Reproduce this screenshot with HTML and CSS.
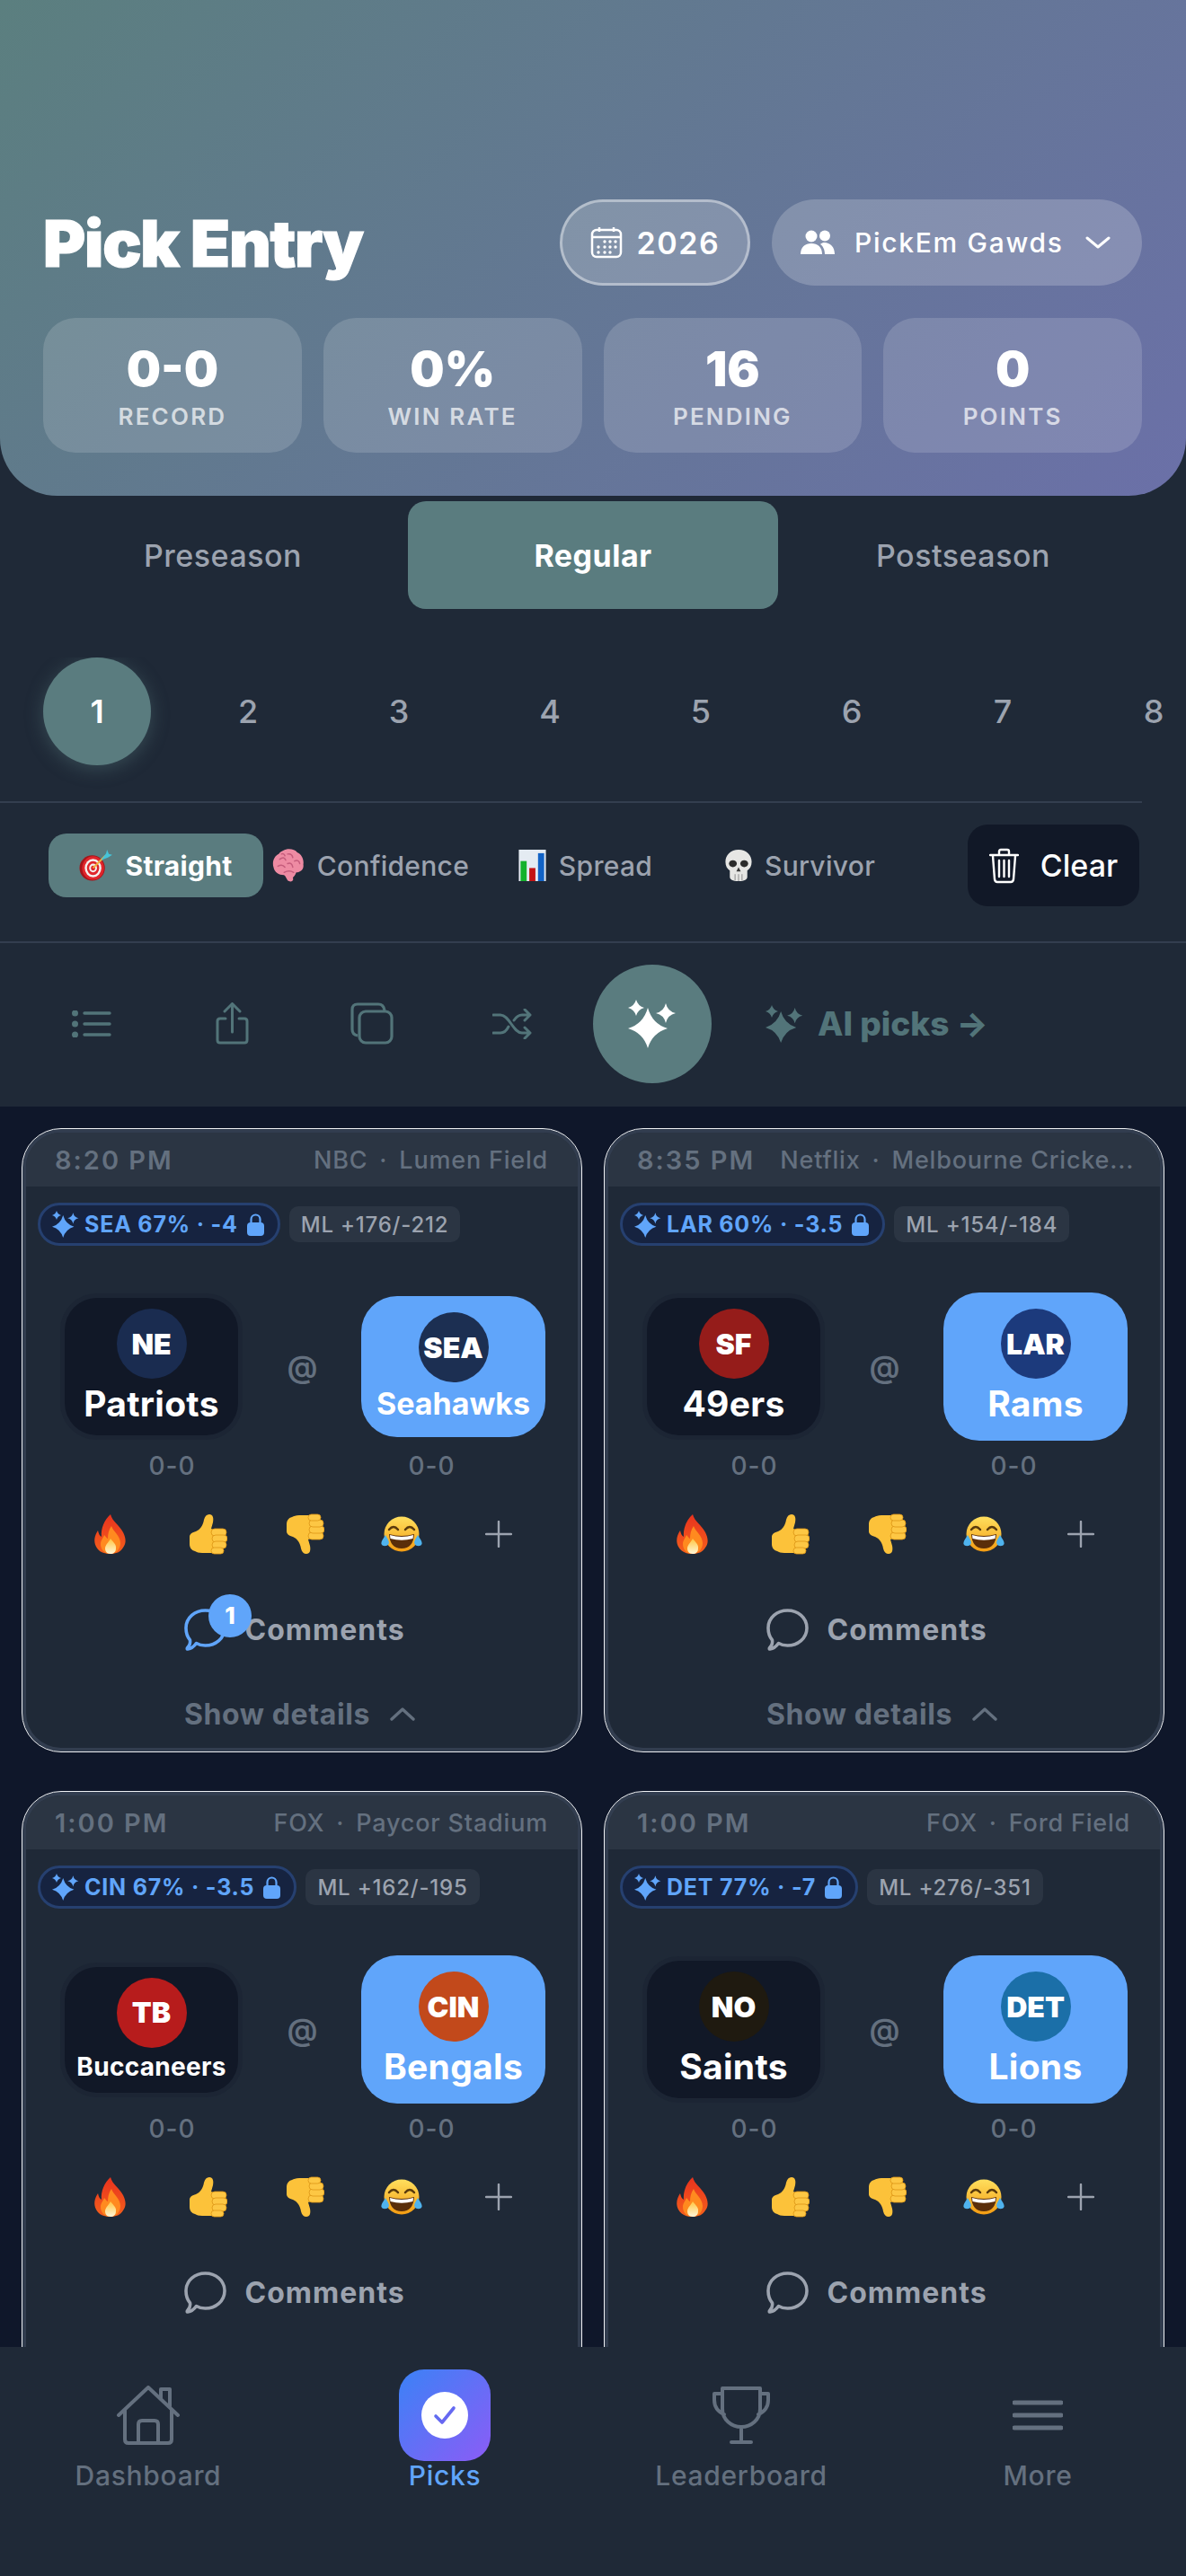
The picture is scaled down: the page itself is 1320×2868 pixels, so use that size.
FILE: index.html
```html
<!DOCTYPE html>
<html lang="en">
<head>
    <meta charset="UTF-8">
    <meta name="viewport" content="width=device-width, initial-scale=1.0">
    <title>Pick Entry</title>
    <link rel="stylesheet" href="styles.css">
</head>
<body>
<svg class="sprite" aria-hidden="true">
    <defs>
        <linearGradient id="flameGrad" x1="0" y1="0" x2="0" y2="1"><stop offset="0" stop-color="#e8321e"/><stop offset="1" stop-color="#f4601c"/></linearGradient>
        <linearGradient id="coreGrad" x1="0" y1="0" x2="0" y2="1"><stop offset="0" stop-color="#ffc640"/><stop offset="1" stop-color="#fff6d8"/></linearGradient>
        <linearGradient id="faceGrad" x1="0" y1="0" x2="0" y2="1"><stop offset="0" stop-color="#ffdf5e"/><stop offset="1" stop-color="#f39c12"/></linearGradient>
        <linearGradient id="checkGrad" x1="0" y1="0" x2="1" y2="1"><stop offset="0" stop-color="#5a72f0"/><stop offset="1" stop-color="#6f62f2"/></linearGradient>
    </defs>
    <symbol id="sparkles" viewBox="0 0 54 54">
        <path d="M22 9Q27 27 44 32Q27 37 22 54Q17 37 0 32Q17 27 22 9Z"/>
        <path d="M9 0Q11 7 18 9Q11 11 9 18Q7 11 0 9Q7 7 9 0Z"/>
        <path d="M42 4Q44 13 53 15Q44 17 42 26Q40 17 31 15Q40 13 42 4Z"/>
    </symbol>
    <symbol id="lock" viewBox="0 0 19 25">
        <path d="M4.5 11V6.5a5 5 0 0 1 10 0V11" fill="none" stroke="currentColor" stroke-width="2.2"/>
        <rect x="0" y="10" width="19" height="15" rx="4" fill="currentColor"/>
    </symbol>
    <symbol id="bubble" viewBox="0 0 47 47">
        <path d="M23.5 2C35 2 45 10 45 21.500S35 41 23.5 41C19 41 16 40 13.500 38.500C11 42 8 44.500 4 45C3 45 3 44 4 43C6 41 7 38 6.500 35C3.500 31.500 2 27 2 21.500C2 10 12 2 23.500 2Z" fill="none" stroke="currentColor" stroke-width="3.600" stroke-linejoin="round"/>
    </symbol>
    <symbol id="flame" viewBox="0 0 40 46">
        <path fill="url(#flameGrad)" d="M20 1C22 9 30 13 34 21C37 27 38 33 34 38C31 43 26 45 20 45C13 45 7 43 4 37C1 31 2 25 6 19C7 23 8 25 10 26C9 17 13 7 20 1Z"/>
        <path fill="#ff8a1f" d="M21 14C23 20 31 25 31 33C31 40 26 45 20 45C13 45 9 40 9 34C9 30 12 27 13 24C15 26 16 28 17 28C17 23 18 18 21 14Z"/>
        <path fill="url(#coreGrad)" d="M20 28C23 32 27 35 26 39C26 43 23 45 20 45C16 45 14 42 14 39C14 35 18 32 20 28Z"/>
    </symbol>
    <symbol id="thumb-up" viewBox="0 0 44 46">
        <g id="thumbShape">
            <path fill="#fcc23a" d="M2 26C2 23 5 21 9 20C14 18 17 13 18 7C19 3 21 1 24 1C28 1 29 5 28 10L26 17L32 20V44H16C12 44 10 43 8 42C4 41 2 38 2 34Z"/>
            <g fill="#fdc744" stroke="#dc9414" stroke-width=".8">
                <rect x="26" y="17" width="17" height="8" rx="4"/>
                <rect x="27" y="24" width="17" height="8" rx="4"/>
                <rect x="27" y="31" width="16" height="8" rx="4"/>
                <rect x="26" y="38" width="14" height="7" rx="3.500"/>
            </g>
        </g>
    </symbol>
    <symbol id="thumb-down" viewBox="0 0 44 46">
        <use href="#thumbShape" transform="matrix(1 0 0 -1 0 46)"/>
    </symbol>
    <symbol id="laugh" viewBox="0 0 46 40">
        <circle cx="23" cy="20" r="19.500" fill="url(#faceGrad)"/>
        <path d="M9 15Q14 9 19 15M27 15Q32 9 37 15" fill="none" stroke="#5a3a0c" stroke-width="2.400" stroke-linecap="round"/>
        <path fill="#5a2e0a" d="M9 20Q23 24 37 20Q36 36 23 36Q10 36 9 20Z"/>
        <path fill="#fff" d="M10 21Q23 25 36 21L35.500 25Q23 28.500 10.500 25Z"/>
        <path fill="#4fb3ee" d="M5 21C7 25 10 28 8.500 31C7 34 1.500 34 .5 31C-.3 28 3 25 5 21ZM41 21C39 25 36 28 37.500 31C39 34 44.500 34 45.500 31C46.300 28 43 25 41 21Z"/>
    </symbol>
    <symbol id="target" viewBox="0 0 38 36">
        <circle cx="15" cy="21" r="14.500" fill="#a5141a"/>
        <ellipse cx="16" cy="21" rx="12.500" ry="13.500" fill="#e0252b"/>
        <ellipse cx="16" cy="21" rx="9.500" ry="10.500" fill="#f5f0ee"/>
        <ellipse cx="16" cy="21" rx="7" ry="8" fill="#e0252b"/>
        <ellipse cx="16" cy="21" rx="4.500" ry="5" fill="#f5f0ee"/>
        <ellipse cx="16" cy="21" rx="2.400" ry="2.800" fill="#e0252b"/>
        <path d="M16 21L30 7" stroke="#f2b33a" stroke-width="2"/>
        <path d="M25 12L31 4L32 0L34 5L38 6L33 9Z" fill="#45c4d8"/>
    </symbol>
    <symbol id="brain" viewBox="0 0 36 38">
        <path fill="#ee8ba3" d="M12 2C17 -1 25 0 28 4C33 6 36 12 35 18C36 23 32 27 27 27C26 30 24 32 23 33C25 37 20 39 17 36C15 33 15 31 13 30C7 30 2 27 1 21C-1 15 2 8 7 6C8 4 10 3 12 2Z"/>
        <path d="M8 12Q13 8 15 13M17 6Q22 5 23 10M25 14Q30 12 31 17M6 20Q11 17 14 21M17 17Q22 15 23 21M13 27Q19 24 24 27M10 6Q13 5 14 8" fill="none" stroke="#c55c7c" stroke-width="1.500" stroke-linecap="round"/>
    </symbol>
    <symbol id="chart" viewBox="0 0 31 36">
        <rect width="31" height="36" fill="#e4ebf2"/>
        <rect x="2" y="13" width="7" height="23" fill="#14b22c"/>
        <rect x="12" y="21" width="7" height="15" fill="#c41414"/>
        <rect x="22" y="4" width="7" height="32" fill="#1263c6"/>
    </symbol>
    <symbol id="skull" viewBox="0 0 30 36">
        <path fill="#e6e6e4" d="M15 0C24 0 30 6 30 14C30 19 28 22 25 24V31C25 34 22 36 15 36C8 36 5 34 5 31V24C2 22 0 19 0 14C0 6 6 0 15 0Z"/>
        <ellipse cx="8.500" cy="16" rx="4.500" ry="4" fill="#2b2b2b"/>
        <ellipse cx="21.500" cy="16" rx="4.500" ry="4" fill="#2b2b2b"/>
        <path d="M15 20L17.500 25H12.500Z" fill="#3a3a3a"/>
        <path d="M11 28V35M15 28V36M19 28V35" stroke="#8b8b8b" stroke-width="1"/>
    </symbol>
</svg>

<div class="page">
    <header class="hero">
        <div class="hero-top">
            <h1>Pick Entry</h1>
            <button class="pill pill-year">
                <svg width="36" height="36" viewBox="0 0 36 36" fill="none" stroke="#fff" stroke-width="2.500"><rect x="2" y="4" width="32" height="30" rx="5"/><path d="M2 12H34M10 1V6M26 1V6"/><g fill="#fff" stroke="none"><circle cx="16" cy="17" r="1.700"/><circle cx="22" cy="17" r="1.700"/><circle cx="28" cy="17" r="1.700"/><circle cx="9" cy="23" r="1.700"/><circle cx="16" cy="23" r="1.700"/><circle cx="22" cy="23" r="1.700"/><circle cx="28" cy="23" r="1.700"/><circle cx="9" cy="29" r="1.700"/><circle cx="16" cy="29" r="1.700"/><circle cx="22" cy="29" r="1.700"/></g></svg>
                2026
            </button>
            <button class="pill pill-group">
                <svg width="40" height="28" viewBox="0 0 40 28" fill="#fff"><circle cx="13" cy="7" r="6.500"/><circle cx="28" cy="6.500" r="6"/><path d="M1 27C1 19 6 15 13 15S25 19 25 27Z"/><path d="M27 14C34 14 39 19 39 27H28C28 22 26 18 23 16C24 15 25.500 14 27 14Z"/></svg>
                <span>PickEm Gawds</span>
                <svg class="pill-chevron" width="28" height="14" viewBox="0 0 28 14" fill="none" stroke="#fff" stroke-width="3" stroke-linecap="round" stroke-linejoin="round"><path d="M2 2L14 12L26 2"/></svg>
            </button>
        </div>
        <div class="stats">
            <div class="stat"><div class="stat-value">0-0</div><div class="stat-label">RECORD</div></div>
            <div class="stat"><div class="stat-value">0%</div><div class="stat-label">WIN RATE</div></div>
            <div class="stat"><div class="stat-value">16</div><div class="stat-label">PENDING</div></div>
            <div class="stat"><div class="stat-value">0</div><div class="stat-label">POINTS</div></div>
        </div>
    </header>

    <nav class="season-tabs">
        <div class="season-tab">Preseason</div>
        <div class="season-tab active">Regular</div>
        <div class="season-tab">Postseason</div>
    </nav>

    <div class="weeks">
        <div class="week active">1</div>
        <div class="week">2</div>
        <div class="week">3</div>
        <div class="week">4</div>
        <div class="week">5</div>
        <div class="week">6</div>
        <div class="week">7</div>
        <div class="week">8</div>
    </div>
    <div class="week-rule"></div>

    <div class="modes">
        <div class="mode active"><svg width="37" height="35"><use href="#target"/></svg>Straight</div>
        <div class="mode"><svg width="36" height="37"><use href="#brain"/></svg>Confidence</div>
        <div class="mode"><svg width="31" height="35"><use href="#chart"/></svg>Spread</div>
        <div class="mode"><svg width="30" height="35"><use href="#skull"/></svg>Survivor</div>
        <button class="clear">
            <svg width="33" height="40" viewBox="0 0 33 40" fill="none" stroke="#fff" stroke-width="2.400" stroke-linecap="round"><path d="M1 8H32M11 7V4Q11 2 13 2H20Q22 2 22 4V7M4 9L6 35Q6.500 38 9 38H24Q26.500 38 27 35L29 9M11 14V32M16.500 14V32M22 14V32"/></svg>
            Clear
        </button>
    </div>

    <div class="actions">
        <button class="action"><svg width="44" height="30" viewBox="0 0 44 30" fill="none" stroke="currentColor" stroke-width="3.400" stroke-linecap="round"><path d="M14 3H42M14 15H42M14 27H42"/><g fill="currentColor" stroke="none"><circle cx="3.500" cy="3" r="3.500"/><circle cx="3.500" cy="15" r="3.500"/><circle cx="3.500" cy="27" r="3.500"/></g></svg></button>
        <button class="action"><svg width="37" height="47" viewBox="0 0 37 47" fill="none" stroke="currentColor" stroke-width="3" stroke-linecap="round" stroke-linejoin="round"><path d="M18.500 33V2M10 10L18.500 1.500L27 10M11 18H5Q2 18 2 21V42Q2 45 5 45H32Q35 45 35 42V21Q35 18 32 18H26"/></svg></button>
        <button class="action"><svg width="48" height="47" viewBox="0 0 48 47" fill="none" stroke="currentColor" stroke-width="3.200"><path d="M8 37Q2 36 2 30V8Q2 2 8 2H31Q37 2 38 9"/><rect x="10" y="10" width="36" height="35" rx="7"/></svg></button>
        <button class="action"><svg width="44" height="34" viewBox="0 0 44 34" fill="none" stroke="currentColor" stroke-width="3" stroke-linecap="round" stroke-linejoin="round"><path d="M1 7H9C19 7 23 27 33 27H42M1 27H9C13 27 16 24 18 20M24 13C26 10 29 7 33 7H42M36 1L42 7L36 13M36 21L42 27L36 33"/></svg></button>
        <button class="action action-main"><svg width="54" height="54" fill="#fff"><use href="#sparkles"/></svg></button>
        <div class="ai-link"><svg width="42" height="42" fill="currentColor"><use href="#sparkles"/></svg>AI picks →</div>
    </div>

    <main class="games">
        <article class="card">
            <div class="card-head"><span class="kick">8:20 PM</span><span class="venue"><span>NBC</span><i>·</i><span>Lumen Field</span></span></div>
            <div class="odds">
                <span class="ai-pill"><svg width="30" height="30" fill="currentColor"><use href="#sparkles"/></svg>SEA 67% · -4<svg width="19" height="25"><use href="#lock"/></svg></span>
                <span class="ml">ML +176/-212</span>
            </div>
            <div class="teams">
                <button class="team"><span class="logo logo-ne">NE</span><span class="team-name">Patriots</span></button>
                <span class="at">@</span>
                <button class="team picked"><span class="logo logo-sea">SEA</span><span class="team-name name-sm">Seahawks</span></button>
            </div>
            <div class="records"><span>0-0</span><span>0-0</span></div>
            <div class="reactions">
                <svg width="40" height="46"><use href="#flame"/></svg>
                <svg width="44" height="46"><use href="#thumb-up"/></svg>
                <svg width="44" height="46"><use href="#thumb-down"/></svg>
                <svg width="46" height="40"><use href="#laugh"/></svg>
                <svg width="30" height="30" viewBox="0 0 30 30" stroke="#9ca3af" stroke-width="2.400" stroke-linecap="round"><path d="M15 1V29M1 15H29"/></svg>
            </div>
            <div class="comments has-new">
                <span class="bubble"><svg width="47" height="47"><use href="#bubble"/></svg><span class="badge">1</span></span>
                Comments
            </div>
            <div class="details">Show details<svg width="28" height="16" viewBox="0 0 28 16" fill="none" stroke="#64707f" stroke-width="3.400" stroke-linecap="round" stroke-linejoin="round"><path d="M2 14L14 3L26 14"/></svg></div>
        </article>

        <article class="card">
            <div class="card-head"><span class="kick">8:35 PM</span><span class="venue"><span>Netflix</span><i>·</i><span>Melbourne Cricke...</span></span></div>
            <div class="odds">
                <span class="ai-pill"><svg width="30" height="30" fill="currentColor"><use href="#sparkles"/></svg>LAR 60% · -3.5<svg width="19" height="25"><use href="#lock"/></svg></span>
                <span class="ml">ML +154/-184</span>
            </div>
            <div class="teams">
                <button class="team"><span class="logo logo-sf">SF</span><span class="team-name">49ers</span></button>
                <span class="at">@</span>
                <button class="team picked"><span class="logo logo-lar">LAR</span><span class="team-name">Rams</span></button>
            </div>
            <div class="records"><span>0-0</span><span>0-0</span></div>
            <div class="reactions">
                <svg width="40" height="46"><use href="#flame"/></svg>
                <svg width="44" height="46"><use href="#thumb-up"/></svg>
                <svg width="44" height="46"><use href="#thumb-down"/></svg>
                <svg width="46" height="40"><use href="#laugh"/></svg>
                <svg width="30" height="30" viewBox="0 0 30 30" stroke="#9ca3af" stroke-width="2.400" stroke-linecap="round"><path d="M15 1V29M1 15H29"/></svg>
            </div>
            <div class="comments">
                <span class="bubble"><svg width="47" height="47"><use href="#bubble"/></svg></span>
                Comments
            </div>
            <div class="details">Show details<svg width="28" height="16" viewBox="0 0 28 16" fill="none" stroke="#64707f" stroke-width="3.400" stroke-linecap="round" stroke-linejoin="round"><path d="M2 14L14 3L26 14"/></svg></div>
        </article>

        <article class="card">
            <div class="card-head"><span class="kick">1:00 PM</span><span class="venue"><span>FOX</span><i>·</i><span>Paycor Stadium</span></span></div>
            <div class="odds">
                <span class="ai-pill"><svg width="30" height="30" fill="currentColor"><use href="#sparkles"/></svg>CIN 67% · -3.5<svg width="19" height="25"><use href="#lock"/></svg></span>
                <span class="ml">ML +162/-195</span>
            </div>
            <div class="teams">
                <button class="team"><span class="logo logo-tb">TB</span><span class="team-name name-xs">Buccaneers</span></button>
                <span class="at">@</span>
                <button class="team picked"><span class="logo logo-cin">CIN</span><span class="team-name">Bengals</span></button>
            </div>
            <div class="records"><span>0-0</span><span>0-0</span></div>
            <div class="reactions">
                <svg width="40" height="46"><use href="#flame"/></svg>
                <svg width="44" height="46"><use href="#thumb-up"/></svg>
                <svg width="44" height="46"><use href="#thumb-down"/></svg>
                <svg width="46" height="40"><use href="#laugh"/></svg>
                <svg width="30" height="30" viewBox="0 0 30 30" stroke="#9ca3af" stroke-width="2.400" stroke-linecap="round"><path d="M15 1V29M1 15H29"/></svg>
            </div>
            <div class="comments">
                <span class="bubble"><svg width="47" height="47"><use href="#bubble"/></svg></span>
                Comments
            </div>
        </article>

        <article class="card">
            <div class="card-head"><span class="kick">1:00 PM</span><span class="venue"><span>FOX</span><i>·</i><span>Ford Field</span></span></div>
            <div class="odds">
                <span class="ai-pill"><svg width="30" height="30" fill="currentColor"><use href="#sparkles"/></svg>DET 77% · -7<svg width="19" height="25"><use href="#lock"/></svg></span>
                <span class="ml">ML +276/-351</span>
            </div>
            <div class="teams">
                <button class="team"><span class="logo logo-no">NO</span><span class="team-name">Saints</span></button>
                <span class="at">@</span>
                <button class="team picked"><span class="logo logo-det">DET</span><span class="team-name">Lions</span></button>
            </div>
            <div class="records"><span>0-0</span><span>0-0</span></div>
            <div class="reactions">
                <svg width="40" height="46"><use href="#flame"/></svg>
                <svg width="44" height="46"><use href="#thumb-up"/></svg>
                <svg width="44" height="46"><use href="#thumb-down"/></svg>
                <svg width="46" height="40"><use href="#laugh"/></svg>
                <svg width="30" height="30" viewBox="0 0 30 30" stroke="#9ca3af" stroke-width="2.400" stroke-linecap="round"><path d="M15 1V29M1 15H29"/></svg>
            </div>
            <div class="comments">
                <span class="bubble"><svg width="47" height="47"><use href="#bubble"/></svg></span>
                Comments
            </div>
        </article>
    </main>

    <footer class="tabbar">
        <div class="tab">
            <span class="tab-icon"><svg width="70" height="66" viewBox="0 0 70 66" fill="none" stroke="#64707f" stroke-width="4" stroke-linecap="round" stroke-linejoin="round"><path d="M2 33L35 2L68 33M49 14V4H59V23M9 27V60Q9 64 13 64H57Q61 64 61 60V27M24 64V43Q24 39 28 39H42Q46 39 46 43V64"/></svg></span>
            Dashboard
        </div>
        <div class="tab active">
            <span class="tab-icon tab-icon-active"><svg width="52" height="52" viewBox="0 0 52 52"><circle cx="26" cy="26" r="26" fill="#fff"/><path d="M16 27L23 34L36 18" fill="none" stroke="url(#checkGrad)" stroke-width="3.600" stroke-linecap="round" stroke-linejoin="round"/></svg></span>
            Picks
        </div>
        <div class="tab">
            <span class="tab-icon"><svg width="66" height="66" viewBox="0 0 66 66" fill="none" stroke="#64707f" stroke-width="4" stroke-linecap="round" stroke-linejoin="round"><path d="M12 3H54V26C54 38 44 46 33 46C22 46 12 38 12 26ZM12 9H3V16C3 24 7 29 14 32M54 9H63V16C63 24 59 29 52 32M33 46V62M22 63H44"/></svg></span>
            Leaderboard
        </div>
        <div class="tab">
            <span class="tab-icon"><svg width="56" height="34" viewBox="0 0 56 34" stroke="#64707f" stroke-width="5" stroke-linecap="round"><path d="M2 3H54M2 17H54M2 31H54"/></svg></span>
            More
        </div>
    </footer>
</div>
</body>
</html>
```

FILE: styles.css
```css
* {
    box-sizing: border-box;
}
html, body {
    margin: 0;
    padding: 0;
}
body {
    width: 1320px;
    height: 2868px;
    overflow: hidden;
    font-family: Inter, "Noto Sans", sans-serif;
    background-color: #1f2937;
    color: #fff;
}
button {
    font-family: inherit;
    border: none;
    background: none;
    color: inherit;
    padding: 0;
}
.sprite {
    display: block;
    width: 0;
    height: 0;
}
.page {
    display: flex;
    flex-direction: column;
    height: 2868px;
}

/* header */
.hero {
    height: 552px;
    flex-shrink: 0;
    display: flex;
    flex-direction: column;
    justify-content: flex-end;
    padding: 0 49px 48px 48px;
    border-radius: 0 0 64px 64px;
    background: linear-gradient(135deg, #5b7f7f 0%, #6b70a8 100%);
}
.hero-top {
    display: flex;
    align-items: center;
    height: 96px;
    margin-bottom: 36px;
}
h1 {
    margin: 0 auto 0 0;
    font-size: 72px;
    font-weight: 900;
    letter-spacing: -1.2px;
    -webkit-text-stroke: 1.2px #fff;
}
.pill {
    display: flex;
    align-items: center;
    height: 96px;
    border-radius: 48px;
    background-color: rgba(255,255,255,0.2);
}
.pill-year {
    width: 212px;
    justify-content: center;
    gap: 16px;
    border: 3px solid rgba(255,255,255,0.4);
    font-size: 34px;
    font-weight: 600;
    letter-spacing: 1.6px;
}
.pill-group {
    width: 412px;
    margin-left: 24px;
    padding-left: 31px;
    font-size: 30px;
    font-weight: 500;
    letter-spacing: 1.7px;
}
.pill-group span {
    margin-left: 21px;
}
.pill-chevron {
    margin-left: auto;
    margin-right: 35px;
}
.stats {
    display: grid;
    grid-template-columns: repeat(4, 1fr);
    gap: 24px;
}
.stat {
    height: 150px;
    border-radius: 36px;
    background-color: rgba(255,255,255,0.15);
    text-align: center;
    padding-top: 25px;
}
.stat-value {
    font-size: 54px;
    line-height: 64px;
    font-weight: 900;
}
.stat-label {
    margin-top: 5px;
    font-size: 26px;
    line-height: 32px;
    font-weight: 600;
    letter-spacing: 2.2px;
    color: rgba(255,255,255,0.7);
}

/* season and week pickers */
.season-tabs {
    display: grid;
    grid-template-columns: repeat(3, 412px);
    margin: 6px 0 0 42px;
    flex-shrink: 0;
}
.season-tab {
    height: 120px;
    display: flex;
    align-items: center;
    justify-content: center;
    border-radius: 20px;
    font-size: 34px;
    font-weight: 500;
    letter-spacing: 0.5px;
    color: #9ca3af;
}
.season-tab.active {
    background-color: #5a7c7f;
    color: #fff;
    font-weight: 700;
}
.weeks {
    display: flex;
    gap: 48px;
    margin-top: 54px;
    padding: 0 0 0 48px;
    overflow: hidden;
    flex-shrink: 0;
    height: 160px;
}
.week {
    flex: 0 0 120px;
    height: 120px;
    border-radius: 50%;
    display: flex;
    align-items: center;
    justify-content: center;
    font-size: 36px;
    font-weight: 500;
    color: #9ca3af;
}
.week.active {
    background-color: #5a7c7f;
    color: #fff;
    font-weight: 600;
    box-shadow: 0 4px 20px rgba(90,124,127,0.4);
}
.week-rule {
    height: 2px;
    margin-right: 49px;
    flex-shrink: 0;
    background-color: #333e4f;
}

/* game mode row */
.modes {
    display: flex;
    align-items: center;
    height: 156px;
    flex-shrink: 0;
    padding: 0 52px 15px 54px;
    border-bottom: 2px solid #333e4f;
}
.mode {
    width: 239px;
    height: 71px;
    display: flex;
    align-items: center;
    justify-content: center;
    gap: 14px;
    border-radius: 20px;
    font-size: 30px;
    font-weight: 500;
    letter-spacing: 0.3px;
    color: #9ca3af;
}
.mode.active {
    background-color: #5a7c7f;
    color: #fff;
    font-weight: 700;
}
.clear {
    width: 191px;
    height: 91px;
    margin-left: auto;
    display: flex;
    align-items: center;
    justify-content: center;
    gap: 24px;
    border-radius: 22px;
    background-color: #111827;
    font-size: 34px;
    font-weight: 500;
}

/* action row */
.actions {
    display: flex;
    align-items: center;
    gap: 24px;
    height: 182px;
    flex-shrink: 0;
    padding: 0 0 3px 36px;
    color: #527479;
}
.action {
    width: 132px;
    height: 132px;
    border-radius: 50%;
    display: flex;
    align-items: center;
    justify-content: center;
}
.action-main {
    background-color: #5a7c7f;
}
.ai-link {
    margin-left: 36px;
    display: flex;
    align-items: center;
    gap: 16px;
    font-size: 37px;
    font-weight: 800;
}

/* game cards */
.games {
    flex: 1;
    min-height: 0;
    overflow: hidden;
    background-color: #0f172a;
    padding: 24px 24px 0;
    display: grid;
    grid-template-columns: repeat(2, 624px);
    grid-auto-rows: 695px;
    gap: 43px 24px;
}
.card {
    border: 1px solid #eef0f3;
    border-radius: 44px;
    padding: 4px;
    background-color: #1f2937;
    box-shadow: inset 0 0 0 4px #323d4f;
}
.card-head {
    height: 60px;
    display: flex;
    align-items: center;
    justify-content: space-between;
    gap: 28px;
    padding: 0 33px 0 32px;
    background-color: #2b3543;
    border-radius: 38px 38px 0 0;
    color: #64707f;
}
.kick {
    font-size: 29px;
    font-weight: 600;
    letter-spacing: 2px;
    flex-shrink: 0;
}
.venue {
    display: flex;
    align-items: center;
    min-width: 0;
    font-size: 27px;
    font-weight: 500;
    letter-spacing: 0.8px;
    white-space: nowrap;
}
.venue i {
    font-style: normal;
    margin: 0 13px;
}
.odds {
    display: flex;
    align-items: center;
    gap: 10px;
    height: 48px;
    margin-top: 18px;
    padding-left: 13px;
}
.ai-pill {
    display: flex;
    align-items: center;
    height: 48px;
    padding: 0 15px 0 13px;
    border: 3px solid #264070;
    border-radius: 24px;
    background-color: #162340;
    color: #60a5fa;
    font-size: 25px;
    font-weight: 700;
    letter-spacing: 0.8px;
    white-space: nowrap;
}
.ai-pill svg:first-child {
    margin-right: 6px;
}
.ai-pill svg:last-child {
    margin-left: 10px;
}
.ml {
    height: 40px;
    padding: 0 13px;
    display: flex;
    align-items: center;
    border-radius: 10px;
    background-color: #2b3543;
    color: #9ca3af;
    font-size: 24px;
    font-weight: 500;
    letter-spacing: 0.8px;
    white-space: nowrap;
}
.teams {
    display: grid;
    grid-template-columns: 205px 1fr 205px;
    align-items: center;
    height: 165px;
    margin-top: 52px;
    padding: 0 36px 0 37px;
}
.team {
    display: flex;
    flex-direction: column;
    align-items: center;
    gap: 5px;
    width: 193px;
    margin: 0 6px;
    padding: 12px 0;
    border-radius: 36px;
    background-color: #111827;
    box-shadow: 0 0 0 5px #1c2534;
    color: #fff;
}
.team.picked {
    width: 205px;
    margin: 0;
    padding: 18px 0;
    border-radius: 40px;
    background-color: #60a5fa;
    box-shadow: none;
}
.logo {
    width: 78px;
    height: 78px;
    border-radius: 50%;
    display: flex;
    align-items: center;
    justify-content: center;
    font-size: 32px;
    font-weight: 900;
}
.logo-ne { background-color: #1a2c50; }
.logo-sea { background-color: #1c2f52; }
.logo-sf { background-color: #951c1a; }
.logo-lar { background-color: #1c3a7c; }
.logo-tb { background-color: #b71c1c; }
.logo-cin { background-color: #c2491b; }
.logo-no { background-color: #1f1a10; }
.logo-det { background-color: #1b6fa8; }
.team-name {
    font-size: 39px;
    line-height: 46px;
    font-weight: 700;
    letter-spacing: 0.3px;
}
.name-sm {
    font-size: 34px;
    line-height: 38px;
    letter-spacing: 0;
}
.name-xs {
    font-size: 28px;
    line-height: 33px;
}
.at {
    text-align: center;
    font-size: 34px;
    font-weight: 600;
    color: #64707f;
}
.records {
    display: flex;
    justify-content: center;
    height: 34px;
    margin-top: 11px;
    color: #64707f;
    font-size: 28px;
    line-height: 34px;
    font-weight: 500;
    letter-spacing: 1px;
}
.records span {
    width: 289px;
    text-align: center;
}
.reactions {
    display: grid;
    grid-template-columns: repeat(5, 108px);
    justify-content: center;
    justify-items: center;
    align-items: center;
    height: 46px;
    margin-top: 36px;
    padding-left: 5px;
}
.comments {
    display: flex;
    align-items: center;
    justify-content: center;
    gap: 20px;
    height: 48px;
    margin-top: 59px;
    padding-right: 16px;
    color: #9ca3af;
    font-size: 32px;
    font-weight: 700;
    letter-spacing: 1px;
}
.bubble {
    position: relative;
    display: block;
    height: 47px;
}
.has-new .bubble {
    color: #60a5fa;
}
.badge {
    position: absolute;
    top: -16px;
    left: 27px;
    width: 48px;
    height: 48px;
    border-radius: 50%;
    background-color: #60a5fa;
    color: #fff;
    font-size: 26px;
    font-weight: 800;
    display: flex;
    align-items: center;
    justify-content: center;
}
.details {
    display: flex;
    align-items: center;
    justify-content: center;
    gap: 22px;
    height: 40px;
    margin-top: 50px;
    padding-right: 5px;
    color: #64707f;
    font-size: 32px;
    font-weight: 700;
    letter-spacing: 0.6px;
}

/* bottom nav */
.tabbar {
    flex: 0 0 255px;
    display: grid;
    grid-template-columns: repeat(4, 330px);
    background-color: #1f2937;
}
.tab {
    display: flex;
    flex-direction: column;
    align-items: center;
    padding-top: 25px;
    color: #64707f;
    font-size: 30px;
    line-height: 32px;
    font-weight: 500;
    letter-spacing: 0.7px;
}
.tab.active {
    color: #60a5fa;
}
.tab-icon {
    width: 102px;
    height: 102px;
    display: flex;
    align-items: center;
    justify-content: center;
}
.tab-icon-active {
    border-radius: 28px;
    background: linear-gradient(135deg, #3b82f6, #8b5cf6);
}
```
